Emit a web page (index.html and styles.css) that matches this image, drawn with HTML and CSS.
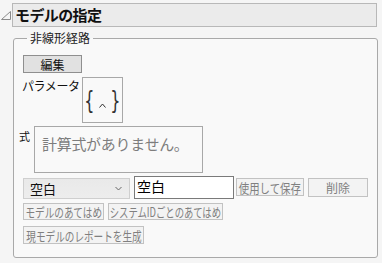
FILE: index.html
```html
<!DOCTYPE html>
<html lang="ja">
  <head>
    <meta charset="UTF-8" />
    <title>モデルの指定</title>
    <link rel="stylesheet" href="styles.css">
  </head>
  <body>
    <div class="outline">
      <div class="outline-head">
        <svg class="disclosure" width="12" height="10" viewBox="0 0 12 10">
          <polygon points="10.5,0.5 10.5,8.5 1.5,8.5" fill="none" stroke="#8a8a8a" stroke-width="1" />
        </svg>
        <div class="outline-title">モデルの指定</div>
      </div>

      <fieldset class="group">
        <legend>非線形経路</legend>
        <button class="btn btn-edit">編集</button>

        <div class="param-row">
          <span class="label">パラメータ</span>
          <div class="param-box">
            <span class="brace">{</span>
            <svg class="caret" width="7" height="5" viewBox="0 0 7 5">
              <polyline points="0.5,4.5 3.5,1 6.5,4.5" fill="none" stroke="#333" stroke-width="1" />
            </svg>
            <span class="brace">}</span>
          </div>
        </div>

        <div class="formula-row">
          <span class="label label-small">式</span>
          <div class="formula-box">計算式がありません。</div>
        </div>

        <div class="control-row">
          <div class="select">
            <span>空白</span>
            <svg width="7" height="5" viewBox="0 0 7 5">
              <polyline points="0.5,1 3.5,4 6.5,1" fill="none" stroke="#666" stroke-width="1" />
            </svg>
          </div>
          <div class="text-input">空白</div>
          <button class="btn btn-off btn-save"><span>使用して保存</span></button>
          <button class="btn btn-off btn-delete"><span>削除</span></button>
        </div>

        <div class="button-row">
          <button class="btn btn-off btn-fit"><span>モデルのあてはめ</span></button>
          <button class="btn btn-off btn-fit-id"><span>システムIDごとのあてはめ</span></button>
        </div>
        <div class="button-row">
          <button class="btn btn-off btn-report"><span>現モデルのレポートを生成</span></button>
        </div>
      </fieldset>
    </div>
  </body>
</html>
```

FILE: styles.css
```css
html,
body {
  margin: 0;
  background: #f5f5f5;
}
body {
  font-family: "Noto Sans CJK JP", "Noto Sans", sans-serif;
  color: #111;
}
.outline {
  width: 382px;
  height: 263px;
}
.outline-head {
  display: flex;
  align-items: flex-start;
  padding-top: 3px;
}
.disclosure {
  margin-top: 8px;
}
.outline-title {
  width: 365px;
  height: 24px;
  box-sizing: border-box;
  border: 1px solid #b8b8b8;
  background: #ebebeb;
  padding-left: 2px;
  font-size: 15px;
  font-weight: 700;
  line-height: 22px;
  letter-spacing: -0.6px;
}

/* 非線形経路のグループ */
.group {
  margin: 4px 0 0 13px;
  width: 365px;
  box-sizing: border-box;
  border: 1px solid #a9a9a9;
  border-radius: 3px;
  background: #f9f9f9;
  padding: 10px 8px 13px 9px;
  min-inline-size: 0;
}
.group legend {
  font-size: 12px;
  line-height: 14px;
  padding: 0 3px;
  margin-left: 4px;
  color: #222;
}

.btn {
  font-family: inherit;
  display: flex;
  align-items: center;
  justify-content: center;
  box-sizing: border-box;
  padding: 0;
  margin: 0;
  white-space: nowrap;
}
.btn-edit {
  width: 59px;
  height: 18px;
  background: #e1e1e1;
  border: 1px solid #8f8f8f;
  font-size: 12px;
  color: #111;
}
.btn-off {
  background: #f3f3f3;
  border: 1px solid #c2c2c2;
  color: #808080;
  font-size: 13px;
  line-height: 15px;
}
/* 細めの字幅に寄せる */
.btn-off span {
  display: inline-block;
  flex: none;
  transform: scaleX(0.74);
}

.label {
  font-size: 12px;
  line-height: 14px;
  letter-spacing: -0.4px;
}
.param-row {
  display: flex;
  align-items: flex-start;
  margin-top: 4px;
  margin-left: -1px;
}
.param-row .label {
  margin-top: 2px;
  width: 60px;
}
.param-box {
  width: 41px;
  height: 46px;
  box-sizing: border-box;
  border: 1px solid #a8a8a8;
  background: #f9f9f9;
  display: flex;
  align-items: center;
  justify-content: center;
  gap: 3px;
  padding-top: 2px;
}
.brace {
  font-family: "DejaVu Sans", sans-serif;
  font-size: 20px;
  line-height: 24px;
  color: #333;
  transform: scale(0.8, 1.2);
}
.caret {
  margin-top: 9px;
}

.formula-row {
  display: flex;
  align-items: flex-start;
  margin-top: 3px;
  margin-left: -4px;
}
.label-small {
  width: 15px;
  margin-top: 3px;
  font-size: 11px;
}
.formula-box {
  width: 169px;
  height: 47px;
  box-sizing: border-box;
  border: 1px solid #a8a8a8;
  background: #f9f9f9;
  padding: 6px 0 0 7px;
  font-size: 15px;
  letter-spacing: -0.3px;
  line-height: 22px;
  color: #7d7d7d;
}

.control-row {
  display: flex;
  align-items: flex-start;
  margin-top: 3px;
}
.select {
  width: 107px;
  height: 21px;
  margin-top: 2px;
  box-sizing: border-box;
  border: 1px solid #cfcfcf;
  background: linear-gradient(#e9e9e9, #ededed);
  display: flex;
  align-items: center;
  justify-content: space-between;
  padding: 0 7px 0 6px;
  font-size: 13px;
}
.text-input {
  width: 100px;
  height: 23px;
  margin-left: 4px;
  box-sizing: border-box;
  border: 1px solid #7a7a7a;
  background: #fff;
  padding-left: 2px;
  font-size: 14px;
  line-height: 18px;
  color: #000;
}
.btn-save {
  width: 68px;
  height: 18px;
  margin: 2px 0 0 2px;
}
.btn-save span {
  transform: scaleX(0.8);
}
.btn-delete {
  width: 60px;
  height: 19px;
  margin: 2px 0 0 4px;
}
.btn-delete span {
  transform: none;
  font-size: 12px;
}

.button-row {
  display: flex;
  gap: 4px;
  margin-top: 4px;
}
.btn-fit {
  width: 81px;
  height: 17px;
}
.btn-fit-id {
  width: 115px;
  height: 17px;
}
.btn-fit-id span {
  transform: scaleX(0.72);
}
.button-row + .button-row {
  margin-top: 6px;
}
.btn-report {
  width: 121px;
  height: 18px;
}
```
